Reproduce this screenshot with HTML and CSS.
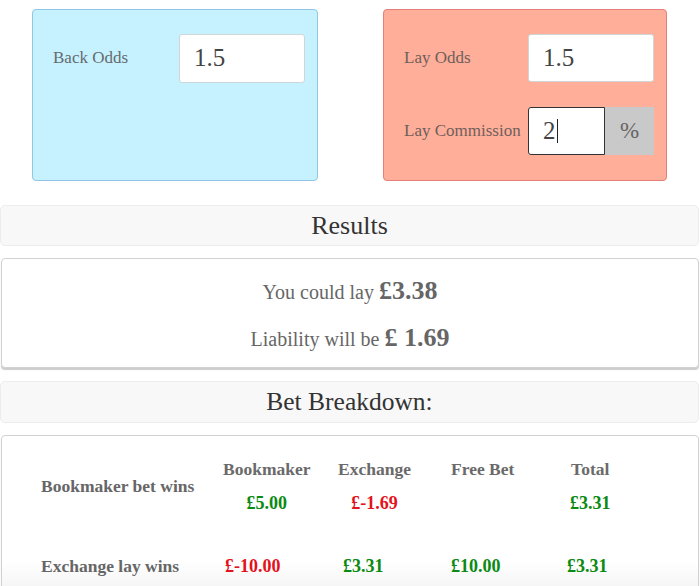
FILE: index.html
```html
<!DOCTYPE html>
<html lang="en">
<head>
<meta charset="utf-8">
<title>Lay Calculator</title>
<link rel="stylesheet" href="styles.css">
</head>
<body>
<div class="calc">
  <div class="col col-back">
    <div class="box box-back">
      <div class="row">
        <span class="label">Back Odds</span>
        <div class="field"><span class="val">1.5</span></div>
      </div>
    </div>
  </div>
  <div class="col col-lay">
    <div class="box box-lay">
      <div class="row">
        <span class="label">Lay Odds</span>
        <div class="field"><span class="val">1.5</span></div>
      </div>
      <div class="row row-2">
        <span class="label">Lay Commission</span>
        <div class="group">
          <div class="field field-focus"><span class="val">2</span><span class="caret"></span></div>
          <div class="addon">%</div>
        </div>
      </div>
    </div>
  </div>
</div>

<div class="section-head"><span>Results</span></div>
<div class="panel results">
  <p class="res-line">You could lay <b>£3.38</b></p>
  <p class="res-line">Liability will be <b>£ 1.69</b></p>
</div>

<div class="section-head head-break"><span>Bet Breakdown:</span></div>
<div class="panel breakdown">
  <div class="bd-grid">
    <div class="bd-label bd-r1">Bookmaker bet wins</div>
    <div class="bd-cell"><div class="stack"><span class="th">Bookmaker</span><span class="pos">£5.00</span></div></div>
    <div class="bd-cell"><div class="stack"><span class="th">Exchange</span><span class="neg">£-1.69</span></div></div>
    <div class="bd-cell"><div class="stack"><span class="th">Free Bet</span><span class="pos"></span></div></div>
    <div class="bd-cell bd-total"><div class="stack"><span class="th">Total</span><span class="pos">£3.31</span></div></div>

    <div class="bd-label bd-r2">Exchange lay wins</div>
    <div class="bd-v bd-c1"><span class="neg">£-10.00</span></div>
    <div class="bd-v bd-c2"><span class="pos">£3.31</span></div>
    <div class="bd-v bd-c3"><span class="pos">£10.00</span></div>
    <div class="bd-v bd-c4"><span class="pos">£3.31</span></div>
  </div>
</div>
</body>
</html>
```

FILE: styles.css
```css
html, body {
  margin: 0;
  padding: 0;
  background: #ffffff;
}
body {
  font-family: "Liberation Serif", "Times New Roman", serif;
  color: #666;
  width: 700px;
  overflow: hidden;
}

.calc {
  display: grid;
  grid-template-columns: 350px 350px;
  padding-top: 9px;
}
.col-back { padding: 0 32px 0 32px; }
.col-lay { padding: 0 33px 0 33px; }

.box {
  box-sizing: border-box;
  height: 172px;
  border-radius: 4px;
  padding: 24px 12px 0 20px;
}
.box-back {
  background: #c6f2ff;
  border: 1px solid #92c6e6;
}
.box-lay {
  background: #ffae9a;
  border: 1px solid #e57f79;
}

.row {
  display: flex;
  align-items: center;
  height: 48px;
}
.row-2 { margin-top: 25px; }
.label {
  flex: 1;
  font-size: 17px;
  color: #676b6d;
}
.box-lay .label { color: #6f5f5a; }

.field {
  box-sizing: border-box;
  width: 126px;
  height: 48px;
  background: #fff;
  border: 1px solid #cfd6d8;
  border-radius: 3px;
  padding-left: 14px;
  display: flex;
  align-items: center;
}
.box-back .field { height: 49px; }
.val {
  font-size: 25px;
  color: #444;
}
.group {
  display: flex;
  width: 126px;
  height: 48px;
}
.field-focus {
  width: 77px;
  border: 1px solid #333;
  border-radius: 3px 0 0 3px;
}
.caret {
  display: inline-block;
  width: 1px;
  height: 24px;
  background: #222;
  margin-left: 1px;
}
.addon {
  flex: 1;
  background: #c9c9c9;
  display: flex;
  align-items: center;
  justify-content: center;
  font-size: 23px;
  color: #666;
}

.section-head {
  box-sizing: border-box;
  margin: 24px 1px 0 0;
  height: 41px;
  background: #f8f8f8;
  border: 1px solid #ececec;
  border-radius: 5px;
  display: flex;
  align-items: center;
  justify-content: center;
  font-size: 26px;
  color: #333;
}
.head-break {
  margin-top: 13px;
  height: 42px;
  font-size: 25.5px;
}

.panel {
  box-sizing: border-box;
  margin: 12px 1px 0 1px;
  background: #fff;
  border: 1px solid #d2d2d2;
  border-radius: 4px;
  box-shadow: 0 2px 1px rgba(0, 0, 0, 0.2);
}
.results {
  height: 110px;
  padding-top: 18px;
}
.res-line {
  margin: 0;
  height: 47px;
  text-align: center;
  font-size: 20px;
  color: #666;
  line-height: 28px;
}
.res-line b {
  font-size: 26px;
}

.breakdown {
  height: 170px;
  padding: 22px 0 0 39px;
  background: linear-gradient(#fff 0, #fff 125px, #f2f2f2 160px);
}
.bd-grid {
  display: grid;
  grid-template-columns: 182px 115px 113px 116px 120px;
  grid-template-rows: 64px 64px;
  font-weight: bold;
  font-size: 17.5px;
}
.bd-label {
  color: #666;
  display: flex;
  align-items: center;
}
.bd-r1 { padding-bottom: 8px; }
.bd-cell {
  display: flex;
  align-items: flex-start;
}
.bd-total { padding-left: 3px; }
.stack {
  display: flex;
  flex-direction: column;
  align-items: center;
  line-height: 22px;
  gap: 12px;
}
.th { color: #6a6a6a; }
.pos { color: #0b8a14; font-size: 18px; }
.neg { color: #e3121c; font-size: 18px; }
.bd-r2 { align-items: flex-end; padding-bottom: 9px; }
.bd-v {
  display: flex;
  align-items: flex-end;
  padding-bottom: 9px;
}
.bd-c1 { padding-left: 2px; }
.bd-c2 { padding-left: 5px; }
.bd-c4 { padding-left: 0; }
```
